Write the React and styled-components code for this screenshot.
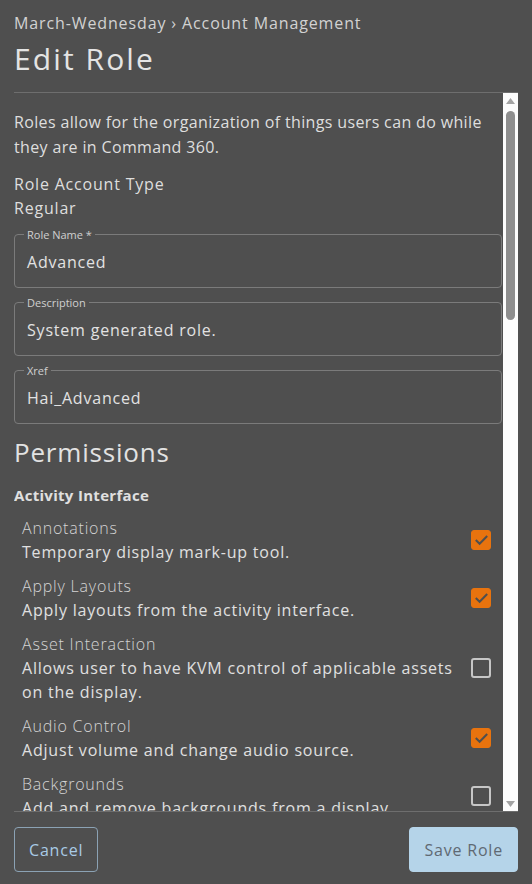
import React from "react";
import styled, { createGlobalStyle } from "styled-components";

const GlobalStyle = createGlobalStyle`
  html, body {
    margin: 0;
    padding: 0;
    background: #4f4f4f;
  }
  * { box-sizing: border-box; }
  body {
    font-family: "Open Sans", "Liberation Sans", sans-serif;
    letter-spacing: 0.05em;
    color: #dedede;
  }
`;

const Page = styled.div`
  height: 100vh;
  display: flex;
  flex-direction: column;
  padding: 12px 14px 12px 14px;
`;

const Breadcrumb = styled.div`
  font-size: 16px;
  line-height: 22px;
  letter-spacing: 0.055em;
  color: #d2d2d2;
`;

const Title = styled.h1`
  margin: 7px 0 15px;
  font-size: 30px;
  line-height: 36px;
  font-weight: 400;
  letter-spacing: 0.07em;
  color: #e4e4e4;
`;

const ScrollFrame = styled.div`
  flex: 1;
  min-height: 0;
  display: flex;
  border-top: 1px solid #6e6e6e;
  border-bottom: 1px solid #6e6e6e;
`;

const Viewport = styled.div`
  flex: 1;
  min-width: 0;
  overflow: hidden;
`;

const Track = styled.div`
  width: 15px;
  flex: none;
  display: flex;
  flex-direction: column;
  align-items: center;
  background: #fcfcfc;
`;

const Arrow = styled.div`
  height: 15px;
  width: 15px;
  display: flex;
  align-items: center;
  justify-content: center;
`;

const Rail = styled.div`
  flex: 1;
  padding: 3px 0;
`;

const Thumb = styled.div`
  width: 9px;
  height: 209px;
  border-radius: 5px;
  background: #8e8e8e;
`;

const Content = styled.div`
  padding: 17px 0 20px;
`;

const Intro = styled.p`
  margin: 0 0 12px;
  font-size: 16px;
  line-height: 25px;
  letter-spacing: 0.022em;
`;

const InfoLine = styled.div`
  font-size: 16px;
  line-height: 24px;
`;

const Field = styled.fieldset`
  margin: 8px 1px 0 0;
  padding: 10px 12px 14px;
  border: 1px solid #7b7b7b;
  border-radius: 4px;
  min-width: 0;
`;

const Legend = styled.legend`
  padding: 0 3px;
  margin-left: -3px;
  font-size: 11px;
  line-height: 13px;
  letter-spacing: 0;
  color: #d0d0d0;
`;

const FieldValue = styled.div`
  font-size: 16px;
  line-height: 22px;
  color: #e2e2e2;
`;

const Heading = styled.h2`
  margin: 10px 0 0;
  font-size: 26px;
  line-height: 36px;
  font-weight: 400;
  color: #e2e2e2;
`;

const Section = styled.h3`
  margin: 14px 0 10px;
  font-size: 15px;
  line-height: 22px;
  font-weight: 700;
  letter-spacing: 0.02em;
  color: #e0e0e0;
`;

const Item = styled.div`
  display: grid;
  grid-template-columns: 1fr 20px;
  column-gap: 14px;
  align-items: center;
  padding: 0 12px 0 8px;
  margin-bottom: 10px;
`;

const ItemText = styled.div`
  font-size: 16px;
  line-height: 24px;
`;

const ItemTitle = styled.div`
  color: #d4d4d4;
  font-weight: 300;
`;

const ItemDesc = styled.div`
  color: #e0e0e0;
`;

const Box = styled.span`
  width: 20px;
  height: 20px;
  border-radius: 3px;
  display: flex;
  align-items: center;
  justify-content: center;
  background: ${(p) => (p.$checked ? "#e8730e" : "transparent")};
  border: ${(p) => (p.$checked ? "1px solid #e8730e" : "2px solid #c6c6c6")};
`;

const Footer = styled.div`
  display: flex;
  justify-content: space-between;
  margin-top: 15px;
`;

const Button = styled.button`
  height: 45px;
  padding: 0 14px;
  border-radius: 4px;
  font-family: inherit;
  letter-spacing: inherit;
  font-size: 16px;
  cursor: pointer;
  border: 1px solid ${(p) => (p.$primary ? "#b5d4e9" : "#8ba2b4")};
  background: ${(p) => (p.$primary ? "#b5d4e9" : "transparent")};
  color: ${(p) => (p.$primary ? "#5f6973" : "#a9cbe6")};
`;

const Checkbox = ({ checked }) => (
  <Box $checked={checked}>
    {checked && (
      <svg width="15" height="12" viewBox="0 0 15 12">
        <polyline
          points="1.8,6 5.6,9.8 13.2,2"
          fill="none"
          stroke="#4f4f4f"
          strokeWidth="2"
        />
      </svg>
    )}
  </Box>
);

const Scrollbar = () => (
  <Track>
    <Arrow>
      <svg width="9" height="6" viewBox="0 0 9 6">
        <polygon points="0,6 9,6 4.5,0" fill="#a3a3a3" />
      </svg>
    </Arrow>
    <Rail>
      <Thumb />
    </Rail>
    <Arrow>
      <svg width="9" height="6" viewBox="0 0 9 6">
        <polygon points="0,0 9,0 4.5,6" fill="#a3a3a3" />
      </svg>
    </Arrow>
  </Track>
);

const permissions = [
  ["Annotations", "Temporary display mark-up tool.", true],
  ["Apply Layouts", "Apply layouts from the activity interface.", true],
  ["Asset Interaction", "Allows user to have KVM control of applicable assets on the display.", false],
  ["Audio Control", "Adjust volume and change audio source.", true],
  ["Backgrounds", "Add and remove backgrounds from a display.", false],
];

export default function App() {
  return (
    <>
      <GlobalStyle />
      <Page>
        <Breadcrumb>March-Wednesday › Account Management</Breadcrumb>
        <Title>Edit Role</Title>
        <ScrollFrame>
          <Viewport>
            <Content>
              <Intro>
                Roles allow for the organization of things users can do while
                they are in Command 360.
              </Intro>
              <InfoLine>Role Account Type</InfoLine>
              <InfoLine>Regular</InfoLine>
              <Field>
                <Legend>Role Name *</Legend>
                <FieldValue>Advanced</FieldValue>
              </Field>
              <Field>
                <Legend>Description</Legend>
                <FieldValue>System generated role.</FieldValue>
              </Field>
              <Field>
                <Legend>Xref</Legend>
                <FieldValue>Hai_Advanced</FieldValue>
              </Field>
              <Heading>Permissions</Heading>
              <Section>Activity Interface</Section>
              {permissions.map(([t, d, c]) => (
                <Item key={t}>
                  <ItemText>
                    <ItemTitle>{t}</ItemTitle>
                    <ItemDesc>{d}</ItemDesc>
                  </ItemText>
                  <Checkbox checked={c} />
                </Item>
              ))}
            </Content>
          </Viewport>
          <Scrollbar />
        </ScrollFrame>
        <Footer>
          <Button>Cancel</Button>
          <Button $primary>Save Role</Button>
        </Footer>
      </Page>
    </>
  );
}
